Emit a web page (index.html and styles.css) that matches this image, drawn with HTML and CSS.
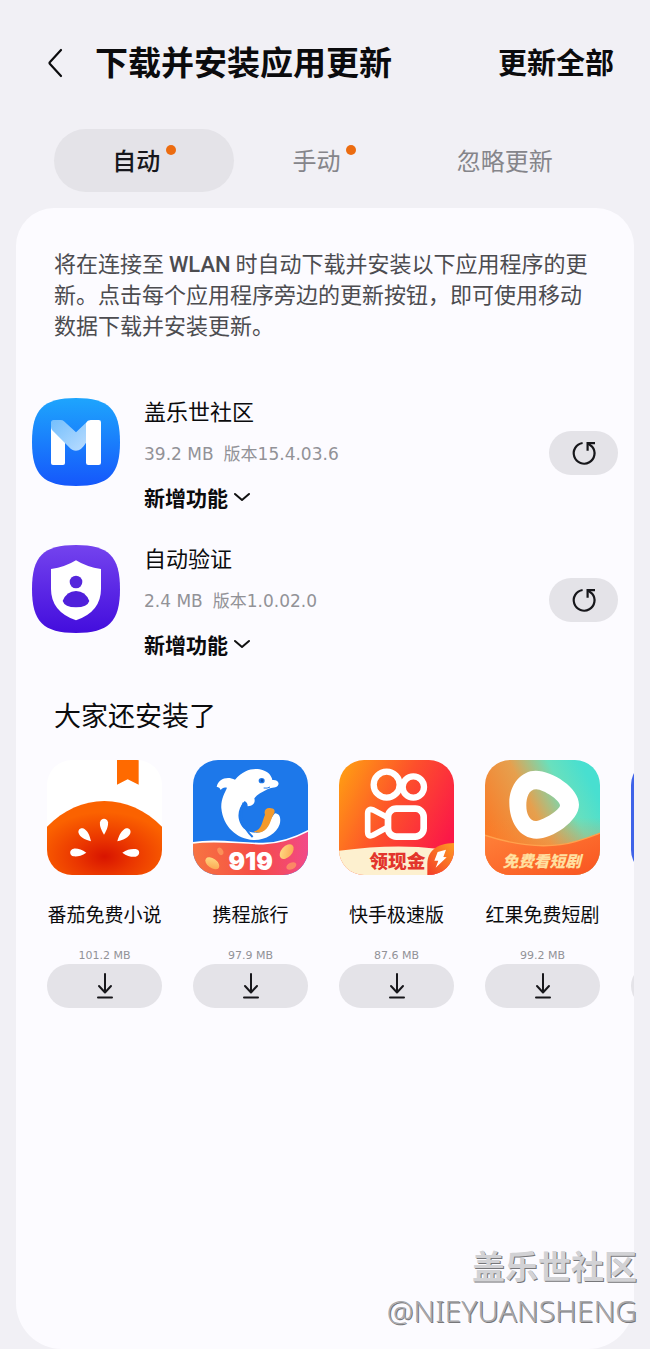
FILE: index.html
```html
<!DOCTYPE html>
<html lang="zh-CN">
<head>
  <meta charset="UTF-8">
  <meta name="viewport" content="width=device-width, initial-scale=1.0">
  <title>下载并安装应用更新</title>
  <link rel="stylesheet" href="styles.css">
</head>
<body>

  <header class="header">
    <button class="back" type="button" aria-label="返回">
      <svg width="16" height="30" viewBox="0 0 16 30" fill="none" stroke="#0b0b0d" stroke-width="2.2" stroke-linecap="round" stroke-linejoin="round"><path d="M14 2 L3 14 Q2 15 3 16 L14 28"/></svg>
    </button>
    <h1>下载并安装应用更新</h1>
    <button class="update-all" type="button">更新全部</button>
  </header>

  <nav class="tabs">
    <button class="tab active" type="button">自动<span class="dot"></span></button>
    <button class="tab" type="button">手动<span class="dot"></span></button>
    <button class="tab" type="button">忽略更新</button>
  </nav>

  <main class="card">
    <p class="intro">将在连接至 <span class="wlan">WLAN</span> 时自动下载并安装以下应用程序的更新。点击每个应用程序旁边的更新按钮，即可使用移动数据下载并安装更新。</p>

    <section class="updates">
      <article class="app">
        <svg class="app-icon" viewBox="36 38 264 264">
          <defs>
            <linearGradient id="blue" x1="0" y1="0" x2="0" y2="1"><stop offset="0" stop-color="#1ea5fd"/><stop offset="1" stop-color="#1557fb"/></linearGradient>
            <linearGradient id="fold" x1="0" y1="0" x2="1" y2="1"><stop offset="0" stop-color="#74bffc"/><stop offset="1" stop-color="#b9dcff"/></linearGradient>
          </defs>
          <path fill="url(#blue)" d="M168 38 C266 38 300 72 300 170 C300 268 266 302 168 302 C70 302 36 268 36 170 C36 72 70 38 168 38 Z"/>
          <path fill="#fff" d="M93 116 L135 150 V233 Q135 239 129 239 H99 Q93 239 93 233 Z"/>
          <path fill="#fff" d="M198 112 Q202 104 212 104 H236 Q243 104 243 111 V232 Q243 239 236 239 H205 Q198 239 198 232 Z"/>
          <path fill="url(#fold)" d="M101 104 H122 Q128 104 132 108 L168 141 L198 112 V172 Q184 196 168 196 Q156 196 146 184 L96 134 Q93 130 93 124 V112 Q93 104 101 104 Z"/>
        </svg>
        <div class="app-info">
          <h2>盖乐世社区</h2>
          <p class="meta"><span>39.2 MB</span><span>版本15.4.03.6</span></p>
          <button class="whats-new" type="button">新增功能
            <svg width="16" height="10" viewBox="0 0 16 10" fill="none" stroke="#111" stroke-width="2" stroke-linecap="round" stroke-linejoin="round"><path d="M1 2 L8 8 L15 2"/></svg>
          </button>
        </div>
        <button class="pill refresh" type="button" aria-label="更新盖乐世社区">
          <svg width="26" height="26" viewBox="0 0 26 26" fill="none" stroke="#17171b" stroke-width="2.2"><path d="M11.6 3 A10.4 10.4 0 1 0 21 6.5 L16.6 3.2"/><path d="M16.6 10.8 V3.2 H24"/></svg>
        </button>
      </article>

      <article class="app">
        <svg class="app-icon" viewBox="36 480 264 264">
          <defs>
            <linearGradient id="violet" x1="0" y1="0" x2="0" y2="1"><stop offset="0" stop-color="#7443ee"/><stop offset="1" stop-color="#430ddd"/></linearGradient>
          </defs>
          <path fill="url(#violet)" d="M168 480 C266 480 300 514 300 612 C300 710 266 744 168 744 C70 744 36 710 36 612 C36 514 70 480 168 480 Z"/>
          <path fill="#fff" d="M168 526 Q200 546 243 552 V612 Q243 680 168 706 Q93 680 93 612 V552 Q136 546 168 526 Z"/>
          <circle cx="168" cy="591" r="19" fill="#5526dc"/>
          <path fill="#4f1fdb" d="M168 618 Q196 618 208 648 Q202 667 168 667 Q134 667 128 648 Q140 618 168 618 Z"/>
        </svg>
        <div class="app-info">
          <h2>自动验证</h2>
          <p class="meta"><span>2.4 MB</span><span>版本1.0.02.0</span></p>
          <button class="whats-new" type="button">新增功能
            <svg width="16" height="10" viewBox="0 0 16 10" fill="none" stroke="#111" stroke-width="2" stroke-linecap="round" stroke-linejoin="round"><path d="M1 2 L8 8 L15 2"/></svg>
          </button>
        </div>
        <button class="pill refresh" type="button" aria-label="更新自动验证">
          <svg width="26" height="26" viewBox="0 0 26 26" fill="none" stroke="#17171b" stroke-width="2.2"><path d="M11.6 3 A10.4 10.4 0 1 0 21 6.5 L16.6 3.2"/><path d="M16.6 10.8 V3.2 H24"/></svg>
        </button>
      </article>
    </section>

    <h2 class="section-title">大家还安装了</h2>

    <section class="suggestions">
      <article class="suggestion">
        <svg class="cover" viewBox="36 30 345 345">
          <defs>
            <radialGradient id="tomato" cx="0.5" cy="0.75" r="0.6"><stop offset="0" stop-color="#d81400"/><stop offset="0.4" stop-color="#ea3500"/><stop offset="1" stop-color="#fb6200"/></radialGradient>
          </defs>
          <rect x="36" y="30" width="345" height="345" fill="#fff"/>
          <path fill="url(#tomato)" d="M36 230 C86 180 145 153 208 153 C271 153 331 180 381 230 V375 H36 Z"/>
          <path fill="#ff6a00" d="M246 30 H311 V104 L278 88 L246 104 Z"/>
          <g fill="#fff">
            <path d="M207 254 C196 236 194 226 195 217 C197 203 217 203 219 217 C220 226 217 238 207 254 Z"/>
            <path d="M168 274 C147 269 136 262 131 250 C127 237 140 229 151 239 C160 247 164 255 168 274 Z"/>
            <path d="M247 274 C267 270 281 262 286 250 C290 237 277 229 266 239 C257 246 252 256 247 274 Z"/>
            <path d="M154 308 C140 318 126 320 116 319 C102 317 102 298 116 296 C128 295 140 298 154 308 Z"/>
            <path d="M262 308 C276 319 290 321 302 320 C316 317 316 298 302 297 C288 296 276 298 262 308 Z"/>
          </g>
        </svg>
        <h3>番茄免费小说</h3>
        <p class="size">101.2 MB</p>
        <button class="pill download" type="button" aria-label="下载番茄免费小说"><svg width="20" height="28" viewBox="0 0 20 28"><path d="M10 2 V20 M4 14 L10 20.5 L16 14 M3 25.5 H17"/></svg></button>
      </article>

      <article class="suggestion">
        <svg class="cover" viewBox="40 29 345 345">
          <defs>
            <linearGradient id="banner" x1="0" y1="0" x2="1" y2="0"><stop offset="0" stop-color="#f77542"/><stop offset="0.55" stop-color="#f54c45"/><stop offset="1" stop-color="#f2498b"/></linearGradient>
            <linearGradient id="gold" x1="0" y1="0" x2="1" y2="1"><stop offset="0" stop-color="#ffe08a"/><stop offset="1" stop-color="#fba04a"/></linearGradient>
          </defs>
          <rect x="40" y="29" width="345" height="345" fill="#1d78ea"/>
          <path fill="#fff" d="M111 109 C116 86 142 76 166 88 C190 60 217 53 240 57 C264 62 275 74 278 89 C292 88 299 95 296 103 C291 114 277 110 265 116 C247 125 233 132 224 144 C228 158 220 167 204 168 C204 160 201 155 195 152 C178 169 171 194 181 217 C188 235 204 247 231 247 C265 248 264 213 286 189 C302 190 304 206 300 222 C291 251 254 271 221 269 C171 267 130 228 125 174 C123 148 135 128 142 112 C133 110 128 112 123 119 C121 113 117 110 111 109 Z"/>
          <path fill="none" stroke="#1d78ea" stroke-width="6" d="M192 157 C176 190 188 230 219 260"/>
          <path fill="#f39a2c" d="M222 244 C248 237 247 213 256 193 C251 179 262 170 274 174 C284 174 288 181 282 192 C271 209 272 235 246 245 Q232 249 222 244 Z"/>
          <ellipse cx="246" cy="91" rx="9" ry="8" fill="#1d78ea"/><circle cx="247" cy="91" r="4" fill="#154da5"/>
          <path d="M252 113 Q263 115 271 110" fill="none" stroke="#1d78ea" stroke-width="3"/>
          <path fill="url(#banner)" stroke="#fff" stroke-width="5" d="M34 279 C100 265 180 280 250 280 C310 279 354 259 392 238 V380 H34 Z"/>
          <ellipse cx="321" cy="304" rx="26" ry="16" fill="url(#gold)" transform="rotate(-48 321 304)"/>
          <ellipse cx="98" cy="339" rx="24" ry="14" fill="url(#gold)" transform="rotate(36 98 339)"/>
          <ellipse cx="122" cy="303" rx="8" ry="12" fill="#fb9058" transform="rotate(-28 122 303)"/>
          <ellipse cx="335" cy="347" rx="16" ry="10" fill="#fb8765" transform="rotate(-25 335 347)"/>
          <text x="213" y="359" class="cover-text number" font-size="74">919</text>
        </svg>
        <h3>携程旅行</h3>
        <p class="size">97.9 MB</p>
        <button class="pill download" type="button" aria-label="下载携程旅行"><svg width="20" height="28" viewBox="0 0 20 28"><path d="M10 2 V20 M4 14 L10 20.5 L16 14 M3 25.5 H17"/></svg></button>
      </article>

      <article class="suggestion">
        <svg class="cover" viewBox="36 30 345 345">
          <defs>
            <linearGradient id="flame" x1="0" y1="0.1" x2="1" y2="0.6"><stop offset="0" stop-color="#ff9d13"/><stop offset="0.5" stop-color="#fd502b"/><stop offset="1" stop-color="#fb1848"/></linearGradient>
            <linearGradient id="leaf" x1="0" y1="1" x2="1" y2="0"><stop offset="0" stop-color="#f33b27"/><stop offset="1" stop-color="#ff9c24"/></linearGradient>
          </defs>
          <rect x="36" y="30" width="345" height="345" fill="url(#flame)"/>
          <g fill="none" stroke="#fff">
            <circle cx="179" cy="104" r="39" stroke-width="19"/>
            <circle cx="259" cy="111" r="32" stroke-width="19"/>
            <rect x="183" y="176" width="107" height="84" rx="25" stroke-width="20"/>
            <path stroke-width="17" stroke-linejoin="round" d="M183 203 L139 180 Q122 174 122 190 V245 Q122 263 139 255 L183 231"/>
          </g>
          <path fill="#fdf0cf" d="M36 302 Q200 280 330 296 L310 375 H36 Z"/>
          <text x="211" y="353" class="cover-text cash" font-size="56">领现金</text>
          <path fill="url(#leaf)" d="M301 375 V342 C301 304 327 281 381 279 V375 Z"/>
          <path fill="#fff" d="M332 306 L357 299 L349 321 L359 322 L326 353 L334 332 L322 332 Z"/>
        </svg>
        <h3>快手极速版</h3>
        <p class="size">87.6 MB</p>
        <button class="pill download" type="button" aria-label="下载快手极速版"><svg width="20" height="28" viewBox="0 0 20 28"><path d="M10 2 V20 M4 14 L10 20.5 L16 14 M3 25.5 H17"/></svg></button>
      </article>

      <article class="suggestion">
        <svg class="cover" viewBox="33 30 345 345">
          <defs>
            <linearGradient id="sunset" x1="0" y1="0.6" x2="0.9" y2="0.15"><stop offset="0" stop-color="#fa7926"/><stop offset="0.45" stop-color="#e6a04e"/><stop offset="0.75" stop-color="#69e0bd"/><stop offset="1" stop-color="#48dfd0"/></linearGradient>
            <linearGradient id="wave" x1="0" y1="0" x2="1" y2="1"><stop offset="0" stop-color="#ff8239"/><stop offset="1" stop-color="#f95320"/></linearGradient>
            <linearGradient id="warm" x1="0" y1="0" x2="0" y2="1"><stop offset="0.5" stop-color="#ff8630" stop-opacity="0"/><stop offset="0.85" stop-color="#ff7930" stop-opacity="0.5"/></linearGradient>
          </defs>
          <rect x="33" y="30" width="345" height="345" fill="url(#sunset)"/>
          <rect x="33" y="30" width="345" height="345" fill="url(#warm)"/>
          <path fill="#fff" fill-rule="evenodd" d="M185 62 C235 63 315 112 315 164 C315 213 235 266 188 266 C135 266 106 213 106 159 C106 102 143 62 185 62 Z M187 118 C164 118 157 143 157 167 C157 191 167 214 187 213 C209 211 258 179 258 166 C258 151 209 119 187 118 Z"/>
          <path fill="url(#wave)" stroke="#ffa14d" stroke-width="4" d="M28 254 C110 282 190 293 260 284 C310 277 350 260 384 247 V380 H28 Z"/>
          <text x="203" y="352" class="cover-text drama" font-size="47">免费看短剧</text>
        </svg>
        <h3>红果免费短剧</h3>
        <p class="size">99.2 MB</p>
        <button class="pill download" type="button" aria-label="下载红果免费短剧"><svg width="20" height="28" viewBox="0 0 20 28"><path d="M10 2 V20 M4 14 L10 20.5 L16 14 M3 25.5 H17"/></svg></button>
      </article>

      <article class="suggestion" aria-hidden="true">
        <div class="cover next-cover"></div>
        <h3></h3>
        <p class="size"></p>
        <div class="pill download"></div>
      </article>
    </section>
  </main>

  <div class="watermark">
    <strong>盖乐世社区</strong>
    <span>@NIEYUANSHENG</span>
  </div>

</body>
</html>
```
FILE: styles.css
```css
* {
  box-sizing: border-box;
}

body {
  position: relative;
  display: flex;
  flex-direction: column;
  min-height: 100vh;
  margin: 0;
  background-color: #f1f0f5;
  color: #0b0b0d;
  font-family: 'Noto Sans CJK SC', sans-serif;
}

h1,
h2,
h3,
p {
  margin: 0;
  font-weight: 400;
}

button {
  padding: 0;
  border: none;
  background: none;
  color: inherit;
  font-family: inherit;
  cursor: pointer;
}

svg {
  display: block;
}

/* Header */
.header {
  display: flex;
  align-items: center;
  height: 129px;
  padding: 0 36px 4px 47px;
}

.back {
  width: 48px;
}

.header h1 {
  flex: 1;
  padding-bottom: 4px;
  font-size: 33px;
  font-weight: 700;
  line-height: 48px;
}

.update-all {
  padding-bottom: 4px;
  font-size: 29px;
  font-weight: 700;
  line-height: 48px;
}

/* Tabs */
.tabs {
  display: grid;
  grid-template-columns: repeat(3, 1fr);
  padding: 0 55px 0 54px;
  margin-bottom: 16px;
}

.tab {
  display: flex;
  justify-content: center;
  align-items: center;
  gap: 6px;
  height: 63px;
  padding-bottom: 2px;
  border-radius: 32px;
  color: #85858a;
  font-size: 24px;
}

.tab.active {
  background-color: #e4e3e8;
  color: #17171c;
  font-weight: 500;
}

.dot {
  width: 10px;
  height: 10px;
  margin-bottom: 20px;
  border-radius: 50%;
  background-color: #ec6c10;
}

/* Content card */
.card {
  flex: 1;
  margin: 0 16px;
  padding-top: 39px;
  border-radius: 38px 38px 46px 46px;
  background-color: #fcfbff;
  overflow: hidden;
}

.intro {
  padding: 0 38px;
  color: #4c4c50;
  font-size: 22px;
  line-height: 31px;
}

.wlan {
  font-family: 'Roboto', sans-serif;
  font-weight: 500;
  line-height: 1;
}

.updates {
  display: flex;
  flex-direction: column;
  gap: 27px;
  padding: 58px 16px 0;
}

.app {
  display: flex;
  gap: 24px;
  height: 120px;
}

.app-icon {
  width: 88px;
  height: 88px;
}

.app-info {
  flex: 1;
}

.app-info h2 {
  font-size: 22px;
  line-height: 24px;
}

.meta {
  display: flex;
  gap: 10px;
  margin: 18px 0 14px;
  color: #929297;
  font-family: 'DejaVu Sans', 'Noto Sans CJK SC', sans-serif;
  font-size: 17px;
  line-height: 28px;
}

.whats-new {
  display: flex;
  align-items: center;
  gap: 6px;
  font-size: 21px;
  font-weight: 700;
  line-height: 30px;
}

.pill {
  display: flex;
  justify-content: center;
  align-items: center;
  height: 44px;
  border-radius: 22px;
  background-color: #e4e3e8;
}

.refresh {
  width: 69px;
  margin-top: 33px;
}

.section-title {
  margin-top: 30px;
  padding: 0 38px;
  font-size: 27px;
  line-height: 40px;
}

/* Suggested apps */
.suggestions {
  display: flex;
  gap: 31px;
  margin-top: 25px;
  padding-left: 31px;
  overflow: hidden;
}

.suggestion {
  flex: 0 0 115px;
  text-align: center;
}

.cover {
  width: 115px;
  height: 115px;
  border-radius: 25px;
}

.next-cover {
  background-color: #3f63e8;
}

.cover-text {
  font-family: 'Noto Sans CJK SC', sans-serif;
  font-weight: 900;
  text-anchor: middle;
}

.number {
  fill: #fff;
  font-family: 'Inter', sans-serif;
}

.cash {
  fill: #e3352c;
}

.drama {
  fill: #ffe0a0;
  font-style: italic;
}

.suggestion h3 {
  height: 28px;
  margin-top: 25px;
  font-size: 19px;
  line-height: 28px;
  white-space: nowrap;
}

.size {
  height: 16px;
  margin-top: 20px;
  color: #929297;
  font-family: 'DejaVu Sans', sans-serif;
  font-size: 11px;
  line-height: 16px;
}

.download {
  width: 100%;
}

.download path {
  fill: none;
  stroke: #17171b;
  stroke-width: 2;
  stroke-linecap: round;
  stroke-linejoin: round;
}

/* Watermark over the page corner */
.watermark {
  position: absolute;
  right: 13px;
  bottom: 16px;
  display: flex;
  flex-direction: column;
  align-items: flex-end;
  color: #d2d2d5;
  text-shadow: 1px 1px 0 #77777a;
}

.watermark strong {
  font-size: 33px;
  font-weight: 700;
  line-height: 48px;
}

.watermark span {
  color: #a8a8ab;
  font-family: 'Noto Sans', sans-serif;
  font-size: 30px;
  font-weight: 300;
  line-height: 44px;
}
```
